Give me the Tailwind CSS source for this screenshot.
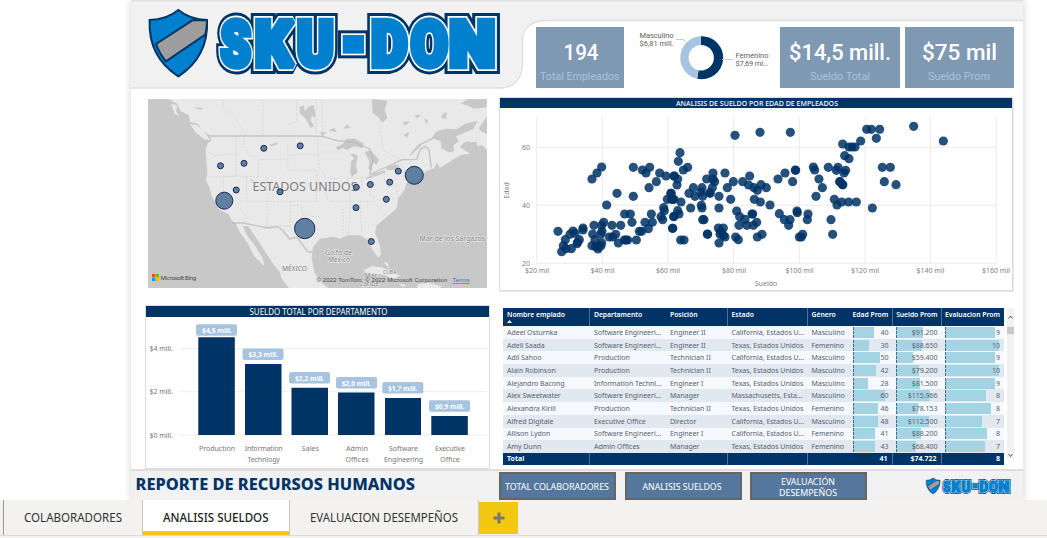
<!DOCTYPE html>
<html lang="es">
<head>
<meta charset="utf-8">
<title>Reporte de Recursos Humanos</title>
<script src="https://cdn.jsdelivr.net/npm/@tailwindcss/browser@4"></script>
</head>
<body class="w-[1047px] h-[538px] overflow-hidden bg-white flex flex-col font-['Noto_Sans',sans-serif]">
<svg class="hidden">
  <defs>
    <g id="word" font-family="Roboto, sans-serif" font-weight="900" font-size="190" stroke-linejoin="miter" stroke-miterlimit="2">
      <text x="272" y="197" textLength="90" lengthAdjust="spacingAndGlyphs">S</text>
      <text x="375" y="197" textLength="112" lengthAdjust="spacingAndGlyphs">K</text>
      <text x="501" y="197" textLength="110" lengthAdjust="spacingAndGlyphs">U</text>
      <rect x="648" y="115" width="44" height="36"/>
      <text x="724" y="197" textLength="108" lengthAdjust="spacingAndGlyphs">D</text>
      <text x="843" y="197" textLength="110" lengthAdjust="spacingAndGlyphs">O</text>
      <text x="958" y="197" textLength="138" lengthAdjust="spacingAndGlyphs">N</text>
    </g>
    <g id="logo">
      <path d="M145 30Q180 59 231 60Q236 170 145 229Q54 170 59 60Q110 59 145 30Z" fill="#0080cf"/>
      <path d="M78 132L187 61L231 61Q231 85 226 104L108 184Q88 160 78 132Z" fill="#9e9e9e" stroke="#003366" stroke-width="6"/>
      <path d="M145 30Q180 59 231 60Q236 170 145 229Q54 170 59 60Q110 59 145 30Z" fill="none" stroke="#003366" stroke-width="6"/>
      <use href="#word" fill="#003366" stroke="#003366" stroke-width="48"/>
      <use href="#word" fill="#fff" stroke="#fff" stroke-width="30"/>
      <use href="#word" fill="#0080cf" stroke="#0080cf" stroke-width="20"/>
    </g>
  </defs>
</svg>

<main class="relative ml-[131px] w-[892px] h-[500px] shrink-0 bg-white shadow-[0_0_8px_rgba(0,0,0,.18)] flex flex-col">
  <header class="relative h-[89px] flex shrink-0">
    <svg class="absolute inset-0" width="892" height="89" viewBox="131 0 892 89">
      <path d="M131 0H1023V20H547C532 20 523 28 522 40V64C522 78 514 88 501 88H131Z" fill="#f1f1f1"/>
      <path d="M1023 20.5H547C532 20.5 522.500 28 522.500 40V64C522.500 78 514 88 501 88H131M131 .5H1023" fill="none" stroke="#dfdfdf" stroke-width="1.300"/>
    </svg>
    <svg class="relative shrink-0" width="393" height="88" viewBox="3 0 1179 264" aria-label="SKU-DON"><use href="#logo"/></svg>
    <div class="relative flex mt-[27px] ml-3 h-[61px] font-[Roboto,sans-serif]">
      <svg class="bg-[#8099b3] w-[88px] shrink-0" viewBox="536 27 88 61" fill="#fff">
        <text x="563.500" y="60" font-size="22.500" font-weight="500" textLength="35" lengthAdjust="spacingAndGlyphs">194</text>
        <text x="540" y="80" font-size="11.500" fill="#a6c3df" textLength="79.500" lengthAdjust="spacingAndGlyphs">Total Empleados</text>
      </svg>
      <svg class="w-[156px] shrink-0" viewBox="624 27 156 61" fill="#605e5c" font-size="7.500">
        <path d="M700.800 36.300A21.500 21.500 0 1 1 697.200 78.800L698.500 70.200A12.700 12.700 0 1 0 700.800 45.100Z" fill="#003366"/>
        <path d="M700.800 36.300A21.500 21.500 0 0 0 697.200 78.800L698.500 70.200A12.700 12.700 0 0 1 700.800 45.100Z" fill="#a6c3df"/>
        <path d="M676 39.500H683L686 42M722 59.500H733" fill="none" stroke="#ccc"/>
        <text x="639.500" y="38" textLength="34">Masculino</text><text x="639.500" y="46" textLength="34">$6,81 mill.</text>
        <text x="735.500" y="58" textLength="33">Femenino</text><text x="735.500" y="66" textLength="33">$7,69 mi...</text>
      </svg>
      <svg class="bg-[#8099b3] w-[120px] shrink-0" viewBox="780 27 120 61" fill="#fff">
        <text x="789" y="60" font-size="22.500" font-weight="500" textLength="102" lengthAdjust="spacingAndGlyphs">$14,5 mill.</text>
        <text x="810" y="80" font-size="11.500" fill="#a6c3df" textLength="60" lengthAdjust="spacingAndGlyphs">Sueldo Total</text>
      </svg>
      <svg class="bg-[#8099b3] w-[109px] ml-[5px] shrink-0" viewBox="905 27 109 61" fill="#fff">
        <text x="922" y="60" font-size="22.500" font-weight="500" textLength="75" lengthAdjust="spacingAndGlyphs">$75 mil</text>
        <text x="928" y="80" font-size="11.500" fill="#a6c3df" textLength="62" lengthAdjust="spacingAndGlyphs">Sueldo Prom</text>
      </svg>
    </div>
  </header>

  <section class="flex h-[216px] shrink-0 pt-2 pl-[17px]">
    <svg class="mt-[2px] shrink-0" width="339" height="189" viewBox="148 99 339 189">
      <rect x="148" y="99" width="339" height="189" fill="#c8c8c8"/>
      <g transform="translate(140 92) scale(.33333)" stroke-linejoin="round">
        <g fill="#e9e9e9">
          <path d="M85 21L112 35L122 58L146 68L150 90L174 96L186 116L209 129L214 147L204 152L197 170L199 205L202 242L197 265L208 285L216 315L228 335L239 355L265 366L276 386L288 395L300 422L323 453L342 492L373 523L369 501L348 466L320 428L309 403L324 402L350 440L376 480L402 519L420 541L424 558L448 590H566L545 572L525 545L515 500L519 465L540 440L580 434L600 440L622 430L660 430L686 445L696 472L715 497L723 487L719 458L705 422L710 400L740 375L770 349L775 320L794 292L802 265L832 262L858 238L884 228L890 212L900 228L928 210L960 190L990 185L960 165L975 150L1000 143L1012 115L1041 72V21Z"/>
          <path d="M150 96L172 100L201 130L211 145L193 142L166 120ZM93 35L112 40L108 58L118 72L104 66Z"/>
          <path d="M990 130L1012 103L1025 120L1041 125V174L1027 160L1011 163L1010 150L985 151Z"/>
          <path d="M670 535L696 522L730 527L757 545L780 550L765 560L730 548L701 544L682 545ZM836 576L867 572L905 583L897 590H830ZM735 508L744 515L748 530L733 514ZM775 574L800 580L788 585Z"/>
        </g>
        <g fill="#c8c8c8">
          <path d="M696 21L742 26L734 55L742 78L728 92L713 74L698 63ZM478 45L490 40L495 58L507 44L520 38L525 60L526 78L516 70L512 85L522 102L512 108L497 80L481 65Z"/>
          <path d="M588 165L609 155L620 140L645 140L670 154L669 168L642 163L622 174L609 168L592 175ZM642 185L653 192L648 219L652 241L636 254L630 240L634 207L643 198L630 188ZM674 180L692 174L717 203L710 218L698 210L694 238L685 230L689 210ZM678 258L701 245L734 235L738 240L708 252L680 262ZM738 227L767 217L779 222L768 233L740 234Z"/>
          <path d="M806 192L832 160L875 138L890 118L919 110L950 112L978 94L1013 87L1000 111L970 124L948 133L956 147L941 160L942 178L927 181L904 169L902 147L881 140L848 157L815 187ZM962 35L983 22L1041 21V46L1003 50L985 42ZM160 45L190 48L181 54ZM388 158L412 151L411 158L392 163ZM330 258L341 266L339 275Z"/>
          <path d="M566 115L583 108L590 121ZM788 90L810 88L796 101ZM790 129L808 119L801 137ZM822 72L841 67L834 79ZM908 65L921 61L918 82L904 77ZM853 79L864 85L859 98ZM540 120L561 121L547 132ZM610 110L622 96L630 108Z"/>
        </g>
        <g fill="none" stroke="#d2d0c8" stroke-width="2" stroke-dasharray="6 4">
          <path d="M250 21V50L290 83L315 128M369 21V133M470 21V87L444 100V235M528 21V125M205 180L224 191L288 186V135M199 253H355V202H440M287 186V253L250 256V303L316 370V389M313 133V165L330 193H355M320 253V327M320 328H540M380 253V408M440 188H532M441 235H530V328M451 328V402H380M451 340H486V365L510 372L545 375M532 133L538 224L553 250L563 328M547 180H609M570 260L625 258L632 327M569 328H700M610 350V425M632 327L625 430M660 327L665 428M700 327L740 375M633 258H665V305M665 258L690 257V310M690 310L720 325L760 320M733 240V263L780 260M745 285L770 280L775 320M780 215L795 235L788 265M812 205V250M545 28L548 120M718 88L730 175L790 206"/>
        </g>
        <g fill="none" stroke="#b7b7b7" stroke-width="4">
          <path d="M210 132H510L550 133L590 146L640 150L689 171L700 205L688 248L740 225L786 203L830 202L840 173L856 163L867 173L874 226M277 393H310L384 408L413 404L427 414L449 441L471 435L502 478L519 482" opacity=".75"/>
        </g>
      </g>
      <g font-family="Noto Sans, sans-serif" fill="#7d7d7d" stroke="#ececec" stroke-width="1.200" paint-order="stroke">
        <text x="252.500" y="190.500" font-size="11.800" textLength="105" lengthAdjust="spacingAndGlyphs">ESTADOS UNIDOS</text>
        <g font-size="6.700">
          <text x="282" y="271" textLength="25">MÉXICO</text><text x="325" y="255" textLength="27">Golfo de</text><text x="328" y="262" textLength="22">México</text>
          <text x="419.500" y="240.500" textLength="65.500" lengthAdjust="spacingAndGlyphs">Mar de los Sargazos</text><text x="383" y="273.500" font-size="5.500" textLength="13.500">CUBA</text><text x="364.500" y="278">Mar</text><text x="359" y="286" textLength="20">Caribe</text>
        </g>
      </g>
      <g fill="#527699" fill-opacity=".92" stroke="#1b2a57" stroke-width="1">
        <circle cx="220.500" cy="165.800" r="3"/><circle cx="244" cy="163.300" r="3"/><circle cx="263.800" cy="148.300" r="3"/><circle cx="300.200" cy="145.800" r="3"/><circle cx="236.200" cy="190" r="3"/><circle cx="280" cy="191.800" r="3"/><circle cx="224.300" cy="200.700" r="8.500"/><circle cx="304.700" cy="228.500" r="10.200"/><circle cx="356.300" cy="187.300" r="3"/><circle cx="370.300" cy="184.500" r="3"/><circle cx="389.700" cy="182.200" r="3"/><circle cx="398.300" cy="171.200" r="3"/><circle cx="414.300" cy="175.300" r="9"/><circle cx="386.300" cy="199.300" r="3"/><circle cx="356" cy="207.700" r="3"/><circle cx="371.300" cy="241.500" r="3"/>
      </g>
      <path d="M152 274h3.300v3.300h-3.300z" fill="#f25022"/><path d="M155.700 274h3.300v3.300h-3.300z" fill="#7fba00"/><path d="M152 277.700h3.300v3.300h-3.300z" fill="#00a4ef"/><path d="M155.700 277.700h3.300v3.300h-3.300z" fill="#ffb900"/>
      <g font-family="Liberation Sans, sans-serif" font-size="6" fill="#444">
        <text x="160.500" y="280" font-family="Noto Sans" textLength="36">Microsoft Bing</text>
        <text x="316.500" y="282" textLength="130.500">© 2022 TomTom, © 2022 Microsoft Corporation</text>
        <text x="452.500" y="282" fill="#3366cc" text-decoration="underline" textLength="17">Terms</text>
      </g>
    </svg>
    <div class="ml-3 w-[514px] h-[194px] border border-[#dcdcdc] shadow-[1px_1px_0_#e8e8e8] bg-white shrink-0">
      <svg width="512" height="192" viewBox="500 98 512 192" font-family="Noto Sans, sans-serif">
        <rect x="500" y="98" width="512" height="10" fill="#003366"/>
        <text x="676" y="106" font-size="7.300" fill="#fff" font-weight="500" textLength="162" lengthAdjust="spacingAndGlyphs">ANALISIS DE SUELDO POR EDAD DE EMPLEADOS</text>
        <path d="M536.700 117V263.300M602.300 117V263.300M668 117V263.300M733.600 117V263.300M799.300 117V263.300M865 117V263.300M930.300 117V263.300M996.200 117V263.300M536.700 147.300H996M536.700 205.300H996M536.700 263.300H996" stroke="#ececec" fill="none"/>
        <g id="dots" fill="#003366" fill-opacity=".85"></g>
        <g font-size="7" fill="#808080">
          <g text-anchor="end"><text x="530" y="150">60</text><text x="530" y="208">40</text><text x="530" y="266">20</text></g>
          <g text-anchor="middle"><text x="537" y="273">$20 mil</text><text x="602.500" y="273">$40 mil</text><text x="668" y="273">$60 mil</text><text x="734" y="273">$80 mil</text><text x="799.500" y="273">$100 mil</text><text x="865" y="273">$120 mil</text><text x="930.500" y="273">$140 mil</text><text x="996" y="273">$160 mil</text><text x="766" y="286">Sueldo</text><text transform="translate(509 190.500) rotate(-90)">Edad</text></g>
        </g>
      </svg>
    </div>
  </section>

  <section class="flex h-[164px] shrink-0 pl-[14px]">
    <div class="w-[345px] h-[164px] border border-[#dcdcdc] bg-white shrink-0">
      <svg width="343" height="162" viewBox="146 306 343 162" font-family="Noto Sans, sans-serif">
        <rect x="146" y="306" width="343" height="11" fill="#003366"/>
        <text x="249.500" y="314.800" font-size="8" fill="#fff" textLength="138" lengthAdjust="spacingAndGlyphs">SUELDO TOTAL POR DEPARTAMENTO</text>
        <path d="M180 348.500H487M180 391.700H487M180 435H487" stroke="#eee"/>
        <g font-size="7" fill="#777"><text x="149.500" y="351" textLength="23.500">$4 mill.</text><text x="149.500" y="394" textLength="23.500">$2 mill.</text><text x="149.500" y="438" textLength="23.500">$0 mill.</text></g>
        <path fill="#003366" d="M198.300 337.300h36.500V435h-36.500zM245 364h36.500V435H245zM291.500 387.700H328V435h-36.500zM338 392.500h36.500V435H338zM385 398h36V435h-36zM431.300 416h36.500v19h-36.500z"/>
        <g fill="#a6c3df"><rect x="196" y="324.300" width="41" height="11.500" rx="2"/><rect x="242.500" y="348.500" width="41" height="11.500" rx="2"/><rect x="289" y="372" width="41" height="11.500" rx="2"/><rect x="336" y="377" width="41" height="11.500" rx="2"/><rect x="382.300" y="382" width="41" height="11.500" rx="2"/><rect x="429" y="400.300" width="41" height="11.500" rx="2"/></g>
        <g font-size="7" font-weight="700" fill="#fff"><text x="202" y="333" textLength="30" lengthAdjust="spacingAndGlyphs">$4,5 mill.</text><text x="248.500" y="357" textLength="29.500" lengthAdjust="spacingAndGlyphs">$3,3 mill.</text><text x="295" y="380.500" textLength="29.500" lengthAdjust="spacingAndGlyphs">$2,2 mill.</text><text x="341.700" y="385.500" textLength="29.500" lengthAdjust="spacingAndGlyphs">$2,0 mill.</text><text x="388" y="390.700" textLength="29.500" lengthAdjust="spacingAndGlyphs">$1,7 mill.</text><text x="435" y="409" textLength="29.500" lengthAdjust="spacingAndGlyphs">$0,9 mill.</text></g>
        <g font-size="7" fill="#777" text-anchor="middle"><text x="217" y="451" textLength="36">Production</text><text x="263.700" y="451" textLength="38">Information</text><text x="263.700" y="462" textLength="32.500">Technlogy</text><text x="310.300" y="451" textLength="17">Sales</text><text x="357" y="451" textLength="22">Admin</text><text x="357" y="462" textLength="23">Offices</text><text x="403.500" y="451" textLength="29">Software</text><text x="403.500" y="462" textLength="39">Engineering</text><text x="450" y="451" textLength="30">Executive</text><text x="450" y="462" textLength="19.500">Office</text></g>
      </svg>
    </div>
    <div class="ml-[13px] mt-[3px] w-[501px] shrink-0 text-[7px] leading-none text-[#56636f] h-[157px]">
      <div class="grid grid-cols-[87px_76px_61.5px_80px_45px_40px_49px_62.500px] h-[18px] bg-[#003366] text-white font-semibold text-[6.8px] whitespace-nowrap">
        <div class="pl-1 pt-[4px] border-r border-[#4d7093]">Nombre emplado<svg class="mt-[1px]" width="5" height="3"><path d="M0 3L2.500 0L5 3Z" fill="#fff"/></svg></div>
        <div class="pl-1 pt-[4px] tracking-[-0.05px]">Departamento</div><div class="pl-1 pt-[4px] border-r border-[#4d7093]">Posición</div><div class="pl-1 pt-[4px] border-r border-[#4d7093]">Estado</div><div class="pl-1 pt-[4px]">Género</div>
        <div class="pr-1 pt-[4px] text-right border-r border-[#4d7093]">Edad Prom</div><div class="pr-[3px] pt-[4px] text-right border-r border-[#4d7093] tracking-[-0.05px]">Sueldo Prom</div><div class="pr-1 pt-[4px] text-right">Evaluacion Prom</div>
      </div>
      <div id="rows" class="h-[127px] grid grid-rows-10 overflow-hidden tracking-[-0.03px]"></div>
      <div class="grid grid-cols-[87px_76px_61.5px_80px_45px_40px_49px_62.500px] h-[12px] bg-[#003366] text-white font-bold items-center leading-[12px]">
        <div class="pl-1 border-r border-[#4d7093]">Total</div><div></div><div class="h-full border-r border-[#4d7093]"></div><div class="h-full border-r border-[#4d7093]"></div><div></div>
        <div class="pr-1 text-right border-r border-[#4d7093]">41</div><div class="pr-1 text-right border-r border-[#4d7093]">$74.722</div><div class="pr-1 text-right">8</div>
      </div>
    </div>
    <div class="ml-[3px] mt-[3px] w-[7px] h-[151px] bg-[#f1f1f1] shrink-0 flex flex-col items-center">
      <svg width="7" height="19"><path d="M1.500 10.500L3.500 8L5.500 10.500" fill="none" stroke="#555"/></svg>
      <div class="w-[7px] h-[7px] bg-[#c8c8c8]"></div>
      <svg class="mt-auto" width="7" height="14"><path d="M1.500 9L3.500 11.500L5.500 9" fill="none" stroke="#555"/></svg>
    </div>
  </section>

  <footer class="flex h-[31px] shrink-0 bg-[#f1f1f1] border-t-2 border-[#dfdfdf] relative">
    <svg class="shrink-0" width="368" height="29" viewBox="131 471 368 29"><text x="135.500" y="490" font-family="Noto Sans, sans-serif" font-weight="800" font-size="16" fill="#003366" textLength="279.500" lengthAdjust="spacingAndGlyphs">REPORTE DE RECURSOS HUMANOS</text></svg>
    <div class="flex gap-[8.500px] mt-[1px] h-[28px] text-white shrink-0">
      <svg class="w-[117px] bg-[#55779d] border-2 border-[#666] shrink-0" viewBox="0 0 113 24" font-family="Noto Sans" font-size="9.500" fill="#fff"><text x="4" y="16" textLength="104" lengthAdjust="spacingAndGlyphs">TOTAL COLABORADORES</text></svg>
      <svg class="w-[117px] bg-[#55779d] border-2 border-[#666] shrink-0" viewBox="0 0 113 24" font-family="Noto Sans" font-size="9.500" fill="#fff"><text x="15.500" y="16" textLength="79" lengthAdjust="spacingAndGlyphs">ANALISIS SUELDOS</text></svg>
      <svg class="w-[117px] bg-[#55779d] border-2 border-[#666] shrink-0" viewBox="0 0 113 24" font-family="Noto Sans" font-size="9.500" fill="#fff"><text x="29" y="10.500" textLength="54" lengthAdjust="spacingAndGlyphs">EVALUACIÓN</text><text x="27" y="22" textLength="58" lengthAdjust="spacingAndGlyphs">DESEMPEÑOS</text></svg>
    </div>
    <svg class="ml-[57.500px] mt-[6px] shrink-0" width="87" height="18" viewBox="45 18 1083 222" preserveAspectRatio="none" aria-label="SKU-DON"><use href="#logo"/></svg>
  </footer>
</main>

<nav class="relative h-[38px] shrink-0 bg-[#f3f2f1] flex pl-[3px]">
  <div class="absolute left-0 bottom-[2px] w-full h-px bg-[#dddbd9]"></div>
  <svg class="relative h-[35px] w-[139px] border-l border-[#999] shrink-0" viewBox="4 500 138 35" font-family="Noto Sans" font-size="12" fill="#333"><text x="24" y="522" textLength="98" lengthAdjust="spacingAndGlyphs">COLABORADORES</text></svg>
  <svg class="relative h-[35px] w-[148px] border-x border-[#c8c6c4] bg-white shrink-0" viewBox="143 500 146 35" font-family="Noto Sans" font-size="12" fill="#222"><rect x="143" y="531" width="146" height="4" fill="#f2c811"/><text x="163" y="522" font-weight="500" textLength="105.500" lengthAdjust="spacingAndGlyphs">ANALISIS SUELDOS</text></svg>
  <svg class="relative h-[35px] w-[189px] border-r border-[#c8c6c4] shrink-0" viewBox="290 500 188 35" font-family="Noto Sans" font-size="12" fill="#333"><text x="310" y="522" textLength="148" lengthAdjust="spacingAndGlyphs">EVALUACION DESEMPEÑOS</text></svg>
  <div class="relative mt-[2px] w-[39px] h-[32px] bg-[#f2c811] flex items-center justify-center"><svg width="12" height="12"><path d="M6 .5V11.500M.5 6H11.500" stroke="#777" stroke-width="3"/></svg></div>
</nav>

<script>
// Scatter marks, grouped by section of the plot; units are thirds of a pixel.
const marks = [
 [495, "320,225 306,243 291,261 415,226 442,234 453,243 464,226 494,243 513,252 484,269 462,287 366,304 415,313 335,339 389,366 406,366 189,418 297,400 326,391 320,400 351,400 377,400 411,391 469,366 450,391 472,391 460,410 264,408 264,414 234,417 225,427 240,424 211,443 253,443 248,450 246,455 205,461 213,470 229,470 200,479 293,426 321,418 318,426 300,443 320,452 291,461 302,464 311,464 309,471 318,461 343,435 353,435 362,427 370,453 388,444 393,444 398,444 424,444 433,418 440,418 506,347 508,356 498,374 503,383 517,322 530,322 528,304 538,252 537,373 533,409"],
 [670, "30,182 25,208 40,234 53,226 12,252 23,261 21,279 129,243 165,243 110,261 129,261 134,269 190,269 218,269 239,252 70,287 96,287 127,287 172,287 236,279 252,287 273,278 289,287 262,295 57,304 75,313 93,300 98,313 120,304 120,302 147,313 182,322 253,322 271,330 300,339 3,304 8,322 12,322 33,330 62,348 94,340 96,348 147,348 23,356 27,366 11,374 98,383 102,383 200,357 246,366 248,366 209,374 225,382 8,409 145,408 160,408 152,418 150,427 160,430 165,435 147,453 112,426 113,427 32,444 42,444 207,400 231,400 250,400 260,391 197,435 205,443 262,435 276,427 195,130 270,121 361,121 324,261 345,243 376,234 377,235 368,269 328,365 343,383 360,383 356,400 381,357 382,362 414,366 412,383 388,435 394,435 398,427 430,225 434,234 447,261 457,287 438,313 475,226 504,226 499,235 509,269 518,278 493,322 501,339 483,383 488,427"],
 [840, "80,112 94,112 119,112 109,139 221,103 310,147 62,147 8,156 27,165 36,165 45,165 14,191 27,200 127,226 151,226 133,269 168,278 17,235 12,243 8,278 0,269 5,330 26,330 49,330 97,348"]
];
document.getElementById('dots').innerHTML = marks.map(([o, s]) => s.split(' ').map(p => {
  const [x, y] = p.split(',').map(Number);
  return `<circle cx="${o + x / 3}" cy="${92 + y / 3}" r="4.600"/>`;
}).join('')).join('');

const rows = [
 ["Adeel Osturnka","Software Engineeri...","Engineer II","California, Estados U...","Masculino",40,"$91.200",9,21.5,27,50.7],
 ["Adell Saada","Software Engineeri...","Engineer II","Texas, Estados Unidos","Femenino",30,"$88.650",10,16,26,54],
 ["Adil Sahoo","Production","Technician II","California, Estados U...","Masculino",50,"$59.400",9,27,17.7,50.7],
 ["Alain Robinson","Production","Technician II","Texas, Estados Unidos","Masculino",42,"$79.200",10,23,23.7,54],
 ["Alejandro Bacong","Information Technl...","Engineer I","Texas, Estados Unidos","Masculino",28,"$81.500",9,15.3,24,50.7],
 ["Alex Sweetwater","Software Engineeri...","Manager","Massachusetts, Esta...","Masculino",60,"$115.966",8,32.5,34,41],
 ["Alexandra Kirill","Production","Technician II","Texas, Estados Unidos","Femenino",46,"$78.153",8,25.3,22.7,46],
 ["Alfred Digitale","Executive Office","Director","California, Estados U...","Masculino",48,"$112.500",7,25.3,33,37],
 ["Allison Lydon","Software Engineeri...","Engineer I","California, Estados U...","Femenino",41,"$88.200",8,22,25,42.7],
 ["Amy Dunn","Admin Offices","Manager","Texas, Estados Unidos","Femenino",43,"$68.400",7,22.7,20,40.3]
];
const bar = (v, w) => `<div class="flex h-full pl-[3px] pr-1 items-center"><div class="h-[11px] bg-[#a4d3e3] border-l border-dashed border-[#47698c] shrink-0" style="width:${w}px;margin-right:-${w}px"></div><span class="ml-auto relative">${v}</span></div>`;
document.getElementById('rows').innerHTML = rows.map((r, i) =>
 `<div class="grid grid-cols-[87px_76px_61.5px_80px_42px_43px_49px_62.500px] items-center whitespace-nowrap ${i % 2 ? 'bg-[#e1e8f0]' : 'bg-[#f5f9fe]'}">` +
 r.slice(0, 5).map(t => `<div class="pl-1">${t}</div>`).join('') + bar(r[5], r[8]) + bar(r[6], r[9]) + bar(r[7], r[10]) + '</div>').join('');
</script>
</body>
</html>
